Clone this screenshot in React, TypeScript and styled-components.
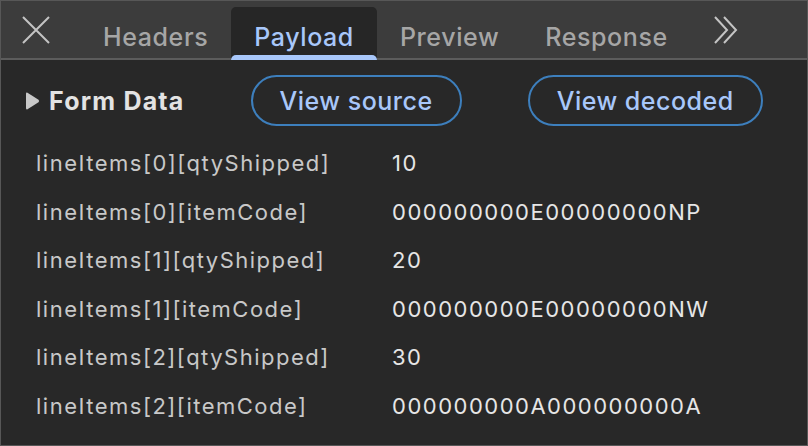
import styled, { createGlobalStyle } from "styled-components";

const GlobalStyle = createGlobalStyle`
  html, body {
    margin: 0;
    padding: 0;
    background: #282828;
  }
  * {
    box-sizing: border-box;
  }
`;

const Panel = styled.div`
  width: 808px;
  height: 446px;
  border: 1px solid #575757;
  background: #282828;
  font-family: Inter, "Noto Sans", sans-serif;
  overflow: hidden;
  white-space: nowrap;
`;

const TabBar = styled.div`
  display: flex;
  align-items: flex-end;
  height: 59px;
  background: #3c3c3c;
  border-bottom: 2px solid #5c5c5c;
`;

const CloseButton = styled.div`
  width: 79px;
  height: 57px;
  flex-shrink: 0;
  display: flex;
  align-items: center;
  justify-content: center;
  padding-right: 10px;
  color: #c4c4c4;
`;

const Tab = styled.div<{ $active?: boolean }>`
  position: relative;
  flex-shrink: 0;
  height: 53px;
  margin-bottom: -2px;
  padding: 7px 23px 0;
  display: flex;
  align-items: center;
  font-size: 25px;
  font-weight: 500;
  letter-spacing: 0.6px;
  color: ${(p) => (p.$active ? "#a8c7fa" : "#a6a6a6")};
  background: ${(p) => (p.$active ? "#262626" : "transparent")};
  border-radius: 5px 5px 0 0;

  &::after {
    content: "";
    display: ${(p) => (p.$active ? "block" : "none")};
    position: absolute;
    left: 0;
    right: 0;
    bottom: 0;
    height: 5px;
    background: #a8c7fa;
    border-radius: 5px 5px 0 0;
  }
`;

const MoreButton = styled.div`
  height: 57px;
  display: flex;
  align-items: center;
  margin-left: 23px;
  color: #c4c4c4;
`;

const Content = styled.div`
  padding: 15px 0 0;
`;

const SectionHeader = styled.div`
  display: flex;
  align-items: center;
  gap: 66px;
  height: 51px;
  padding-left: 24px;
`;

const Title = styled.div`
  display: flex;
  align-items: center;
  flex-shrink: 0;
  gap: 9px;
  font-size: 25px;
  font-weight: 700;
  letter-spacing: 1.2px;
  color: #e3e3e3;
`;

const PillButton = styled.button`
  flex-shrink: 0;
  height: 51px;
  padding: 0 27px;
  border: 2px solid #3d7fbd;
  border-radius: 26px;
  background: transparent;
  color: #a8c7fa;
  font-family: Inter, "Noto Sans", sans-serif;
  font-size: 25px;
  font-weight: 500;
  letter-spacing: 0.5px;
  white-space: nowrap;
`;

const Rows = styled.div`
  margin-top: 13px;
  padding-left: 35px;
  display: grid;
  grid-template-columns: 356px 1fr;
  grid-auto-rows: 48.5px;
  align-items: center;
  font-size: 22px;
  letter-spacing: 1.5px;
`;

const Key = styled.div`
  color: #c8c8c8;
`;

const Value = styled.div`
  color: #e6e6e6;
`;

const rows: [string, string][] = [
  ["lineItems[0][qtyShipped]", "10"],
  ["lineItems[0][itemCode]", "000000000E00000000NP"],
  ["lineItems[1][qtyShipped]", "20"],
  ["lineItems[1][itemCode]", "000000000E00000000NW"],
  ["lineItems[2][qtyShipped]", "30"],
  ["lineItems[2][itemCode]", "000000000A000000000A"],
];

export default function App() {
  return (
    <>
      <GlobalStyle />
      <Panel>
        <TabBar>
          <CloseButton>
            <svg width="28" height="28" viewBox="0 0 28 28">
              <path
                d="M1 1 L27 27 M27 1 L1 27"
                stroke="currentColor"
                strokeWidth="2"
                fill="none"
              />
            </svg>
          </CloseButton>
          <Tab>Headers</Tab>
          <Tab $active>Payload</Tab>
          <Tab>Preview</Tab>
          <Tab>Response</Tab>
          <MoreButton>
            <svg width="24" height="28" viewBox="0 0 24 28">
              <path
                d="M1 1 L13 14 L1 27 M10 1 L22 14 L10 27"
                stroke="currentColor"
                strokeWidth="2"
                fill="none"
              />
            </svg>
          </MoreButton>
        </TabBar>
        <Content>
          <SectionHeader>
            <Title>
              <svg width="15" height="18" viewBox="0 0 15 18">
                <path
                  d="M2.5 0.8 Q1 0 1 2 L1 16 Q1 18 2.5 17.2 L13.5 10.3 Q14.8 9 13.5 7.7 Z"
                  fill="#c8c8c8"
                />
              </svg>
              Form Data
            </Title>
            <PillButton>View source</PillButton>
            <PillButton>View decoded</PillButton>
          </SectionHeader>
          <Rows>
            {rows.map(([k, v]) => (
              <>
                <Key key={k}>{k}</Key>
                <Value key={k + "v"}>{v}</Value>
              </>
            ))}
          </Rows>
        </Content>
      </Panel>
    </>
  );
}
